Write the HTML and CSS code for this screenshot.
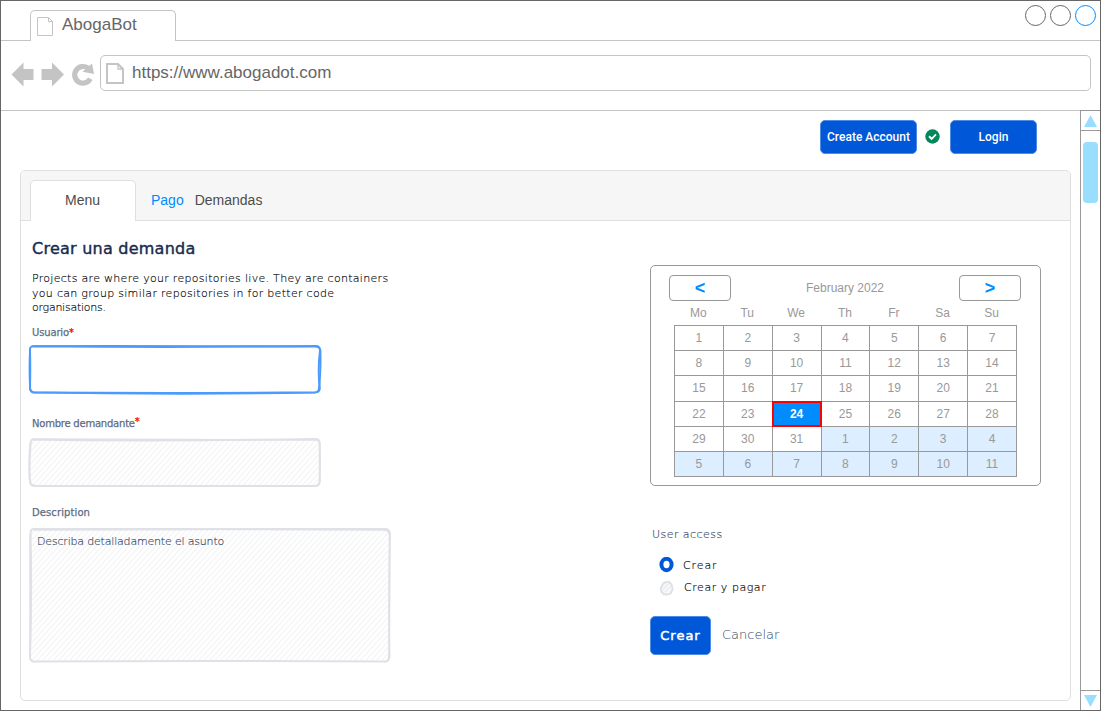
FILE: index.html
```html
<!DOCTYPE html>
<html lang="es">
<head>
<meta charset="utf-8">
<title>AbogaBot</title>
<link rel="stylesheet" href="styles.css">
</head>
<body>
<div class="window">
  <header class="tabbar">
    <div class="browser-tab">
      <svg width="16" height="19" viewBox="0 0 16 19" fill="none" stroke="#c4c4c4"><path d="M.5.5h11l4 4v14H.5zM11.500.5v4h4"/></svg>
      <span>AbogaBot</span>
    </div>
    <svg class="controls" width="72" height="22" viewBox="0 0 72 22" fill="none" stroke="#666"><circle cx="10.500" cy="10.500" r="10"/><circle cx="35.500" cy="10.500" r="10"/><circle cx="60.500" cy="10.500" r="10" stroke="#008cff"/></svg>
  </header>
  <div class="toolbar">
    <svg class="nav" width="84" height="26" viewBox="0 0 84 26" fill="#c4c4c4"><path d="M.5 13.500 12.500 1.500V8h10v11h-10v6.500zM53 13.500 41 1.500V8H30.500v11H41v6.500z"/><path d="M79.300 17.800A8.300 8.300 0 1 1 77 7.200" fill="none" stroke="#c4c4c4" stroke-width="5.200"/><path d="M81 2.500 83 13 71.500 10.800z"/></svg>
    <div class="url">
      <svg width="18" height="21" viewBox="0 0 18 21" fill="none" stroke="#c4c4c4" stroke-width="2"><path d="M1 1h11l5 5v14H1z"/><path d="M12 1v5h5" stroke-width="1.300"/></svg>
      <span>https://www.abogadot.com</span>
    </div>
  </div>
  <div class="viewport">
    <main class="page">
      <div class="account">
        <button class="btn create">Create Account</button>
        <svg class="check" width="15" height="15" viewBox="0 0 15 15"><circle cx="7.500" cy="7.500" r="7.200" fill="#00875a"/><path d="M4 7.300l2.600 2.500 4.400-4.400" fill="none" stroke="#fff" stroke-width="1.900"/></svg>
        <button class="btn login">Login</button>
      </div>
      <section class="panel">
        <nav class="tabs"><a class="active">Menu</a><a class="pago">Pago</a><a class="demandas">Demandas</a></nav>
        <div class="content">
          <div class="left">
            <h1 class="hand title">Crear una demanda</h1>
            <p class="hand intro"><span class="l1">Projects are where your repositories live. They are containers</span><span class="l2">you can group similar repositories in for better code</span><span class="l3">organisations.</span></p>
            <div class="hand label usuario">Usuario<i>*</i></div>
            <svg class="box" width="296" height="53" viewBox="0 0 296 52" preserveAspectRatio="none" fill="none" stroke="#4c9aff" stroke-linecap="round"><path stroke-width="2" d="M6 3.200Q150 4.500 289 3 293 3 293 7.500 290.500 27 292.800 44 293 48 289 48.300 150 49.500 7 48.500 3 48.500 3 44 3.500 25 3 8 2.500 3.200 6 3.200z"/><path stroke-width="1.800" d="M6 3Q110 2.500 289 3.500 293.500 4 293.500 8 294 29 292 44 292 48 288 48.700 150 51 6 48.500 3 47 3 44 2 24 3 7"/></svg>
            <div class="hand label nombre">Nombre demandante<i>*</i></div>
            <svg class="box" width="296" height="53" viewBox="0 0 296 52" preserveAspectRatio="none" fill="none" stroke="#dfe1e6" stroke-linecap="round"><defs><pattern id="hatch" width="4" height="4" patternUnits="userSpaceOnUse" patternTransform="rotate(42)"><path d="M1 0v4" stroke="#f1f2f4" stroke-width="1"/></pattern></defs><rect x="4" y="4" width="289" height="45" fill="url(#hatch)" stroke="none"/><path stroke-width="2" d="M6 3.500Q120 5.500 288 3 292.500 3 292.500 7 293.500 27 292.500 45 292 49 288 49 150 49.500 7 49 3 49 3 44 2 27 3.500 8 3.500 3.500 6 3.500z"/><path stroke-width="1.500" d="M6 3Q120 3.500 288 4 293 4 293 8 292 27 293 44 293 49 288 49M7 48 Q3 48 2.500 43 1.500 25 3 8"/></svg>
            <div class="hand label desc">Description</div>
            <div class="area">
              <svg class="box" width="366" height="139" viewBox="0 0 366 138" preserveAspectRatio="none" fill="none" stroke="#dfe1e6" stroke-linecap="round"><rect x="4" y="4" width="358" height="130" fill="url(#hatch)" stroke="none"/><path stroke-width="2" d="M6 3Q180 3.500 358 3 362.500 3 363 8 361.500 70 362.500 130 362 134.500 358 134.500 180 133.500 7 134.500 3 134 3 130 5 70 3.500 8 3.500 3 6 3z"/><path stroke-width="1.500" d="M7 4Q180 3 358 4 362 5 362.500 9 363 70 362 130 361 135 357 135M7 135Q3 135 3 129 3 70 3 9"/></svg>
              <span class="hand placeholder">Describa detalladamente el asunto</span>
            </div>
          </div>
          <div class="right">
            <div class="calendar">
              <div class="cal-head"><button>&lt;</button><span>February 2022</span><button>&gt;</button></div>
              <div class="days"><span>Mo</span><span>Tu</span><span>We</span><span>Th</span><span>Fr</span><span>Sa</span><span>Su</span></div>
              <div class="grid">
                <b>1</b><b>2</b><b>3</b><b>4</b><b>5</b><b>6</b><b>7</b>
                <b>8</b><b>9</b><b>10</b><b>11</b><b>12</b><b>13</b><b>14</b>
                <b>15</b><b>16</b><b>17</b><b>18</b><b>19</b><b>20</b><b>21</b>
                <b>22</b><b>23</b><b class="today">24</b><b>25</b><b>26</b><b>27</b><b>28</b>
                <b>29</b><b>30</b><b>31</b><b class="next">1</b><b class="next">2</b><b class="next">3</b><b class="next">4</b>
                <b class="next">5</b><b class="next">6</b><b class="next">7</b><b class="next">8</b><b class="next">9</b><b class="next">10</b><b class="next">11</b>
              </div>
            </div>
            <div class="hand access">User access</div>
            <div class="radio"><svg width="16" height="16" viewBox="0 0 16 16"><ellipse cx="7.500" cy="7.500" rx="5.100" ry="5.700" fill="#fff" stroke="#0057d8" stroke-width="4"/></svg><span class="hand r1">Crear</span></div>
            <div class="radio second"><svg width="16" height="16" viewBox="0 0 16 16" fill="none" stroke="#dfe1e6" stroke-width="1.500"><path fill="#f6f7f8" d="M5 2.500 10 1.500 13 5 13.500 9 12 13.500 7 15 2.500 12.500 1.500 8 3.500 4.500z"/><path d="M4 4 8 1.500l4 2 1.800 6-3 4.500-6 .5L1.800 10z"/><path d="M4 10l5-6M6 12l6-6" stroke-width=".8"/></svg><span class="hand r2">Crear y pagar</span></div>
            <div class="actions"><button class="btn submit hand">Crear</button><span class="hand cancel">Cancelar</span></div>
          </div>
        </div>
      </section>
    </main>
    <aside class="scroll">
      <div class="arrow"><svg width="13" height="12" viewBox="0 0 13 12" fill="#99ddff"><path d="M6.500 0 13 12H0z"/></svg></div>
      <div class="track"><div class="thumb"></div></div>
      <div class="arrow down"><svg width="13" height="12" viewBox="0 0 13 12" fill="#99ddff"><path d="M6.500 12 13 0H0z"/></svg></div>
    </aside>
  </div>
</div>
</body>
</html>
```
FILE: styles.css
```css
* { box-sizing: border-box; }
body { margin: 0; font-family: "Liberation Sans", Arial, sans-serif; background: #fff; }
svg { display: block; flex: none; }
button { font-family: inherit; padding: 0; margin: 0; }
.window { width: 1101px; height: 711px; border: 1px solid #666; display: flex; flex-direction: column; overflow: hidden; }
.tabbar { height: 40px; flex: none; display: flex; justify-content: space-between; padding: 9px 0 0 29px; border-bottom: 1px solid #c4c4c4; }
.browser-tab { width: 146px; height: 31px; border: 1px solid #c4c4c4; border-bottom: 0; border-radius: 5px 5px 0 0; background: #fff; display: flex; padding: 6px 0 0 6px; gap: 9px; font-size: 17px; line-height: 17px; color: #666; }
.browser-tab span { margin-top: -1px; }
.controls { margin-top: -5px; margin-right: 3px; }
.toolbar { height: 70px; flex: none; display: flex; padding: 14px 9px 0 10px; border-bottom: 1px solid #c4c4c4; }
.nav { margin: 6px 5px 0 0; }
.url { flex: 1; height: 36px; border: 1px solid #c4c4c4; border-radius: 5px; display: flex; padding: 7px 0 0 5px; gap: 8px; font-size: 17px; line-height: 19px; color: #666; }
.viewport { flex: 1; display: flex; min-height: 0; }
.page { flex: 1; padding: 9px 9px 0 19px; }
.account { display: flex; justify-content: flex-end; align-items: center; padding-right: 34px; height: 34px; }
.check { margin-bottom: 1px; }
.btn { border: 1px solid #4c8ce6; border-radius: 5px; background: #0057d8; color: #fff; }
.create, .login { height: 34px; white-space: nowrap; font: 500 12px Roboto, sans-serif; }
.create { width: 97px; margin-right: 8px; }
.login { width: 87px; margin-left: 10px; }
.panel { margin-top: 16px; height: 531px; border: 1px solid #dfdfdf; border-radius: 5px; }
.tabs { height: 50px; background: #f6f6f6; border-bottom: 1px solid #dfdfdf; border-radius: 4px 4px 0 0; padding: 9px 0 0 8px; display: flex; font-size: 14px; line-height: 41px; color: #4c4c4c; }
.active { width: 106px; height: 41px; margin-left: 1px; border: 1px solid #dfdfdf; border-bottom: 0; border-radius: 5px 5px 0 0; background: #fff; text-align: center; line-height: 39px; padding-right: 1px; }
.pago { margin-left: 15px; color: #008cff; }
.demandas { margin-left: 11px; }
.content { display: flex; padding-left: 9px; }
.left { width: 620px; }
.hand { font-family: "DejaVu Sans", sans-serif; font-weight: 200; font-size: 11px; line-height: 14px; color: #000; white-space: nowrap; }
.title { margin: 17px 0 0 2px; font-size: 16px; font-weight: 400; line-height: 22px; letter-spacing: .24px; color: #172b4d; -webkit-text-stroke: .4px #172b4d; }
.intro { margin: 12px 0 0 2px; display: flex; flex-direction: column; align-items: flex-start; line-height: 14.500px; -webkit-text-stroke: .15px; }
.l1, .l2 { letter-spacing: .3px; }
.l3 { letter-spacing: -.25px; }
.label { margin-left: 2px; font-size: 10px; font-weight: 400; color: #5e6c84; -webkit-text-stroke: .25px; }
.label i { color: #f00; font-style: normal; }
.usuario { margin-top: 10px; letter-spacing: -.15px; }
.box { margin-left: -3px; }
.usuario + .box { margin-top: 3px; }
.nombre { margin-top: 21px; letter-spacing: -.22px; }
.nombre i { position: relative; top: -2px; }
.nombre + .box { margin-top: 5px; }
.desc { margin-top: 17px; letter-spacing: .1px; }
.area { display: grid; margin-top: 6px; }
.area > * { grid-area: 1 / 1; }
.placeholder { padding: 9px 0 0 7px; color: #344563; letter-spacing: -.18px; -webkit-text-stroke: .15px; }
.right { padding-top: 44px; }
.calendar { width: 391px; height: 221px; border: 1px solid #999; border-radius: 5px; padding: 9px 19px 0 18px; color: #999; font-size: 12px; }
.cal-head { display: flex; justify-content: space-between; align-items: center; }
.cal-head button { width: 62px; height: 26px; border: 1px solid #999; border-radius: 4px; background: #fff; color: #008cff; font-weight: 700; font-size: 18px; line-height: 22px; }
.days, .grid { display: grid; grid-template-columns: repeat(7, 48.850px); text-align: center; margin-left: 5px; }
.days { height: 24px; line-height: 24px; }
.grid { width: 343px; grid-auto-rows: 25.200px; border-top: 1px solid #999; border-left: 1px solid #999; }
.grid b { font-weight: 400; line-height: 24px; border-right: 1px solid #999; border-bottom: 1px solid #999; }
.grid .next { background: #dceeff; }
.grid .today { background: #008cff; color: #fff; font-weight: 700; margin: -1px 0 0 -1px; border: 2px solid #f00; line-height: 22px; }
.access { margin: 42px 0 0 2px; color: #344563; letter-spacing: .45px; -webkit-text-stroke: .15px; }
.radio { display: flex; align-items: center; margin: 15px 0 0 9px; gap: 8px; height: 16px; }
.r1 { letter-spacing: .9px; padding-top: 2px; }
.r2 { letter-spacing: .55px; padding-left: 1px; }
.radio .hand { -webkit-text-stroke: .15px; }
.second { margin-top: 7px; }
.actions { display: flex; align-items: center; gap: 11px; margin-top: 20px; }
.submit { width: 61px; height: 39px; color: #fff; font-size: 13px; font-weight: 400; -webkit-text-stroke: .5px #fff; letter-spacing: 1px; }
.cancel { font-size: 13px; color: #344563; margin-bottom: 1px; }
.scroll { width: 20px; border-left: 1px solid #999; display: flex; flex-direction: column; margin-top: -1px; }
.arrow { height: 21px; border-top: 1px solid #999; border-bottom: 1px solid #999; padding: 4px 0 0 3px; }
.arrow.down { border-bottom: 0; height: 20px; }
.track { flex: 1; padding: 11px 0 0 2px; }
.thumb { width: 15px; height: 61px; border-radius: 4px; background: #99ddff; }
```
